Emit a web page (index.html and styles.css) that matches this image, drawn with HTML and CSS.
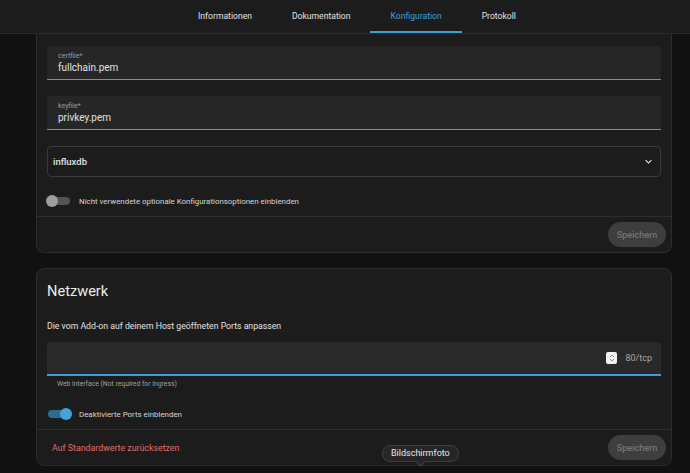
FILE: index.html
```html
<!DOCTYPE html>
<html lang="de">
<head>
    <meta charset="UTF-8">
    <title>Konfiguration</title>
    <link rel="stylesheet" href="styles.css">
</head>
<body>
<div class="header">
    <div class="tabs">
        <span class="tab">Informationen</span>
        <span class="tab">Dokumentation</span>
        <span class="tab active">Konfiguration</span>
        <span class="tab">Protokoll</span>
    </div>
</div>

<div class="content">
    <!-- Optionen -->
    <div class="card card-top">
        <div class="card-body">
            <div class="field">
                <span class="label">certfile*</span>
                <span class="value">fullchain.pem</span>
            </div>
            <div class="field">
                <span class="label">keyfile*</span>
                <span class="value">privkey.pem</span>
            </div>
            <div class="select">
                <span>influxdb</span>
                <svg width="13" height="13" viewBox="0 0 24 24"><path d="M7.4 8.6L12 13.2l4.6-4.6L18 10l-6 6-6-6z" fill="#e8e8e8"/></svg>
            </div>
            <div class="switch-row">
                <span class="switch"><i></i></span>
                <span>Nicht verwendete optionale Konfigurationsoptionen einblenden</span>
            </div>
        </div>
        <div class="card-actions">
            <button class="btn">Speichern</button>
        </div>
    </div>

    <!-- Netzwerk -->
    <div class="card">
        <div class="card-body">
            <h2>Netzwerk</h2>
            <p class="desc">Die vom Add-on auf deinem Host geöffneten Ports anpassen</p>
            <div class="field port">
                <span class="spin">
                    <svg width="8" height="10" viewBox="0 0 8 10"><path d="M2 4l2-2 2 2M2 6l2 2 2-2" fill="none" stroke="#777" stroke-width="0.8"/></svg>
                </span>
                <span class="suffix">80/tcp</span>
            </div>
            <div class="helper">Web interface (Not required for Ingress)</div>
            <div class="switch-row on">
                <span class="switch"><i></i></span>
                <span>Deaktivierte Ports einblenden</span>
            </div>
        </div>
        <div class="card-actions">
            <span class="reset">Auf Standardwerte zurücksetzen</span>
            <button class="btn">Speichern</button>
        </div>
        <div class="tooltip">Bildschirmfoto</div>
    </div>
</div>
</body>
</html>
```

FILE: styles.css
```css
*{
    margin: 0;
    padding: 0;
    box-sizing: border-box;
}
body{
    background: #111111;
    font-family: Roboto, "Liberation Sans", sans-serif;
    color: #e1e1e1;
    height: 473px;
    overflow: hidden;
}
.header{
    height: 34px;
    background: #1c1c1c;
    border-bottom: 1px solid #2b2b2b;
}
.tabs{
    display: flex;
    padding-left: 178px;
    height: 100%;
}
.tab{
    padding: 0 20px;
    font-size: 8.6px;
    line-height: 32px;
    height: 33px;
    color: #e1e1e1;
    border-bottom: 2px solid transparent;
}
.tab.active{
    color: #3d9fd6;
    border-bottom-color: #3d9fd6;
}

.content{
    margin: 0 18px 0 36px;
}
.card{
    position: relative;
    background: #1c1c1c;
    border: 1px solid #2c2c2c;
    border-radius: 8px;
    margin-bottom: 15px;
}
.card-top{
    border-top: none;
    border-radius: 0 0 8px 8px;
}
.card-body{
    padding: 11px 10px 3px;
}
.card-top .card-body{
    padding-top: 12px;
}

.field{
    height: 34px;
    background: #262626;
    border-bottom: 1px solid #8a8a8a;
    border-radius: 4px 4px 0 0;
    padding: 6px 11px 0;
    margin-bottom: 16px;
    display: flex;
    flex-direction: column;
}
.label{
    font-size: 7px;
    color: #9b9b9b;
    line-height: 9px;
}
.value{
    font-size: 10px;
    line-height: 13px;
    color: #e1e1e1;
}
.select{
    height: 31px;
    border: 1px solid #393939;
    border-radius: 4px;
    padding: 0 5px 0 5px;
    display: flex;
    align-items: center;
    justify-content: space-between;
    font-size: 9.5px;
    font-weight: 500;
}

.switch-row{
    display: flex;
    align-items: center;
    height: 24px;
    margin-top: 12px;
    font-size: 7.9px;
    color: #d6d6d6;
}
.switch{
    position: relative;
    width: 22px;
    height: 8px;
    margin: 0 9px 0 1px;
    border-radius: 4px;
    background: #545454;
}
.switch i{
    position: absolute;
    left: -2px;
    top: -2px;
    width: 12px;
    height: 12px;
    border-radius: 50%;
    background: #9e9e9e;
}
.switch-row.on .switch{
    background: #2e6c8e;
}
.switch-row.on .switch i{
    left: auto;
    right: -2px;
    background: #41a3d8;
}

.card-actions{
    border-top: 1px solid #2e2e2e;
    height: 36px;
    display: flex;
    align-items: center;
    justify-content: space-between;
    padding: 0 5px 0 15px;
}
.btn{
    margin-left: auto;
    width: 58px;
    height: 25px;
    border: none;
    border-radius: 13px;
    background: #3e3e3e;
    color: #757575;
    font-family: inherit;
    font-size: 9px;
    font-weight: 500;
}

h2{
    font-size: 14.6px;
    font-weight: 400;
    line-height: 22px;
    margin: 0 0 18px;
    color: #ececec;
}
.desc{
    font-size: 8.7px;
    line-height: 12px;
    margin-bottom: 10px;
}
.field.port{
    background: #292929;
    border-bottom: 2px solid #3d9fd6;
    flex-direction: row;
    justify-content: flex-end;
    align-items: center;
    padding: 0 9px 0 11px;
    margin-bottom: 3px;
}
.spin{
    width: 11px;
    height: 12px;
    background: #f0f0f0;
    border-radius: 2px;
    display: flex;
    align-items: center;
    justify-content: center;
    margin-right: 8px;
}
.suffix{
    font-size: 9px;
    color: #a6a6a6;
}
.helper{
    font-size: 6.8px;
    color: #a0a0a0;
    padding-left: 10px;
    line-height: 10px;
}
.card-body .switch-row.on{
    margin-top: 13px;
    margin-bottom: 0;
}
.reset{
    font-size: 8.8px;
    color: #e06b6b;
}

.tooltip{
    position: absolute;
    left: 345px;
    top: 176px;
    padding: 2px 8px;
    background: #262626;
    border: 1px solid #3f3f3f;
    border-radius: 8px;
    font-size: 9px;
    line-height: 11px;
    color: #e6e6e6;
}
.tooltip:after{
    content: "";
    position: absolute;
    left: 34px;
    bottom: -4px;
    width: 6px;
    height: 6px;
    background: #262626;
    border-right: 1px solid #3f3f3f;
    border-bottom: 1px solid #3f3f3f;
    transform: rotate(45deg);
}
```
